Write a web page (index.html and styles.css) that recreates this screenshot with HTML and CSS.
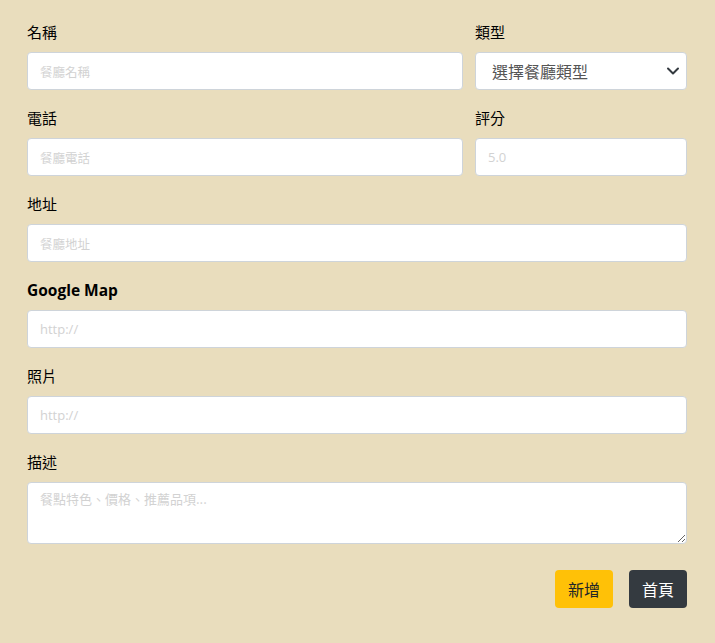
FILE: index.html
```html
<!DOCTYPE html>
<html lang="zh-Hant">
<head>
<meta charset="utf-8">
<link rel="stylesheet" href="styles.css">
</head>
<body>
<form class="form">
  <div class="row">
    <div class="field">
      <label class="label">名稱</label>
      <input class="input" placeholder="餐廳名稱">
    </div>
    <div class="field">
      <label class="label">類型</label>
      <div class="select">
        <span>選擇餐廳類型</span>
        <svg class="chev" width="14" height="10" viewBox="0 0 14 10"><path d="M2 2.5 L7 7.5 L12 2.5" fill="none" stroke="#343a40" stroke-width="2" stroke-linecap="round" stroke-linejoin="round"/></svg>
      </div>
    </div>
  </div>
  <div class="row">
    <div class="field">
      <label class="label">電話</label>
      <input class="input" placeholder="餐廳電話">
    </div>
    <div class="field">
      <label class="label">評分</label>
      <input class="input latin" placeholder="5.0">
    </div>
  </div>
  <div class="field">
    <label class="label">地址</label>
    <input class="input" placeholder="餐廳地址">
  </div>
  <div class="field">
    <label class="label bold">Google Map</label>
    <input class="input latin" placeholder="http://">
  </div>
  <div class="field">
    <label class="label">照片</label>
    <input class="input latin" placeholder="http://">
  </div>
  <div class="field">
    <label class="label">描述</label>
    <textarea class="textarea" placeholder="餐點特色、價格、推薦品項..."></textarea>
  </div>
  <div class="actions">
    <button type="button" class="btn btn-warning">新增</button>
    <button type="button" class="btn btn-dark">首頁</button>
  </div>
</form>
</body>
</html>
```

FILE: styles.css
```css
* { box-sizing: border-box; }
html, body { margin: 0; padding: 0; }
body {
  background: #e9ddbd;
  font-family: "Noto Sans CJK TC", "Noto Sans", sans-serif;
  color: #111;
  width: 715px;
  height: 643px;
  overflow: hidden;
}
.form {
  padding: 20px 28px 0 27px;
  display: flex;
  flex-direction: column;
}
.row {
  display: grid;
  grid-template-columns: 436px 212px;
  column-gap: 12px;
}
.field {
  display: flex;
  flex-direction: column;
  margin-bottom: 16px;
}
.label {
  font-size: 15px;
  line-height: 24px;
  height: 24px;
  margin-bottom: 8px;
  color: #000;
}
.bold { font-weight: 700; font-family: "Open Sans", "Noto Sans", sans-serif; font-size: 15.5px; }
.input, .textarea, .select {
  height: 38px;
  background: #fff;
  border: 1px solid #ced4da;
  border-radius: 4px;
  padding: 0 12px;
  font-family: "Noto Sans CJK TC", sans-serif;
  font-size: 12.5px;
  outline: none;
  width: 100%;
}
.input::placeholder, .textarea::placeholder { color: #d2d2d2; }
.latin { font-family: "Open Sans", "Noto Sans", sans-serif; font-size: 13px; }
.select {
  display: flex;
  align-items: center;
  justify-content: space-between;
  padding: 0 6px 0 16px;
  font-size: 16px;
  color: #555;
}
.textarea {
  height: 62px;
  padding: 6px 12px;
  resize: vertical;
  font-size: 13px;
}
.actions {
  display: flex;
  justify-content: flex-end;
  gap: 16px;
  margin-top: 10px;
}
.btn {
  height: 38px;
  border: none;
  border-radius: 4px;
  padding: 0 12px;
  font-family: "Noto Sans CJK TC", sans-serif;
  font-size: 16px;
  cursor: pointer;
}
.btn-warning { background: #ffc107; color: #212529; width: 58px; }
.btn-dark { background: #343a40; color: #fff; width: 58px; }
```
